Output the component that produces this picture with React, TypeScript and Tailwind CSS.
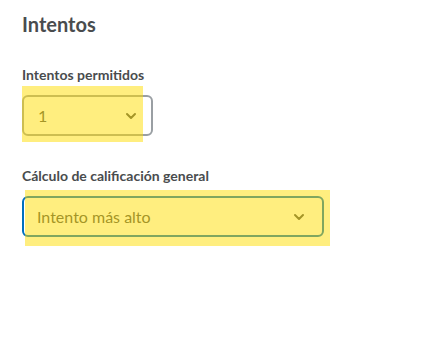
function Chevron() {
  return (
    <svg width="12" height="8" viewBox="0 0 12 8" fill="none" aria-hidden="true">
      <path d="M2 2l4 4 4-4" stroke="#494c4e" strokeWidth="2" strokeLinecap="round" strokeLinejoin="round" />
    </svg>
  );
}

function Highlight({ className }: { className: string }) {
  return <span className={`pointer-events-none absolute bg-[rgba(255,221,0,0.5)] ${className}`} />;
}

export default function App() {
  return (
    <div className="h-[355px] w-[426px] bg-white pl-[22px] pt-[12px] font-['Lato','Liberation_Sans',sans-serif] text-[#494c4e]">
      <h2 className="text-[20px] font-bold leading-[24px]">Intentos</h2>

      <div className="mt-[29px]">
        <label className="block text-[14px] font-bold leading-[20px]">Intentos permitidos</label>
        <div className="relative mt-[10px] w-[131px]">
          <div className="flex h-[41px] items-center justify-between rounded-[6px] border-2 border-[#9a9fa3] pl-[14px] pr-[14px] text-[16px]">
            <span>1</span>
            <Chevron />
          </div>
          <Highlight className="left-0 top-[-9px] h-[56px] w-[121px]" />
        </div>
      </div>

      <div className="mt-[30px]">
        <label className="block text-[14px] font-bold leading-[20px]">Cálculo de calificación general</label>
        <div className="relative mt-[10px] w-[302px]">
          <div className="flex h-[41px] items-center justify-between rounded-[6px] border-2 border-[#006fbf] pl-[13px] pr-[17px] text-[16px]">
            <span>Intento más alto</span>
            <Chevron />
          </div>
          <Highlight className="left-[3px] top-[-6px] h-[56px] w-[305px]" />
        </div>
      </div>
    </div>
  );
}
